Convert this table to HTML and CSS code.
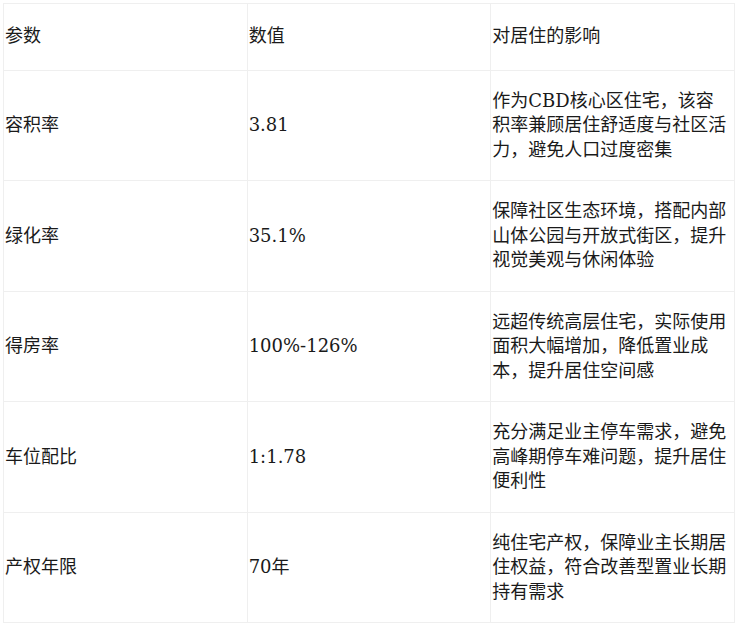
FILE: index.html
```html
<!DOCTYPE html>
<html lang="zh-CN">
<head>
<meta charset="utf-8">
<title>参数表</title>
<link rel="stylesheet" href="styles.css">
</head>
<body>
<div class="wrap">
<table class="params">
  <thead>
    <tr><th>参数</th><th>数值</th><th>对居住的影响</th></tr>
  </thead>
  <tbody>
    <tr><td>容积率</td><td>3.81</td><td>作为CBD核心区住宅，该容积率兼顾居住舒适度与社区活力，避免人口过度密集</td></tr>
    <tr><td>绿化率</td><td>35.1%</td><td>保障社区生态环境，搭配内部山体公园与开放式街区，提升视觉美观与休闲体验</td></tr>
    <tr><td>得房率</td><td>100%-126%</td><td>远超传统高层住宅，实际使用面积大幅增加，降低置业成本，提升居住空间感</td></tr>
    <tr><td>车位配比</td><td>1:1.78</td><td>充分满足业主停车需求，避免高峰期停车难问题，提升居住便利性</td></tr>
    <tr><td>产权年限</td><td>70年</td><td>纯住宅产权，保障业主长期居住权益，符合改善型置业长期持有需求</td></tr>
  </tbody>
</table>
</div>
</body>
</html>
```
FILE: styles.css
```css
html, body {
  margin: 0;
  padding: 0;
  background: #ffffff;
}
.wrap {
  padding: 3px 5px 3px 3px;
}
.params {
  width: 100%;
  table-layout: fixed;
  border-collapse: collapse;
  font-family: "DejaVu Serif", "Noto Sans CJK SC", serif;
  font-size: 18px;
  line-height: 24.5px;
  color: #1a1a1a;
}
.params th,
.params td {
  border: 1px solid #efefef;
  text-align: left;
  vertical-align: middle;
  font-weight: normal;
  padding: 18px 4px 18px 1px;
}
.params th {
  padding-top: 20px;
  padding-bottom: 21px;
}
```
